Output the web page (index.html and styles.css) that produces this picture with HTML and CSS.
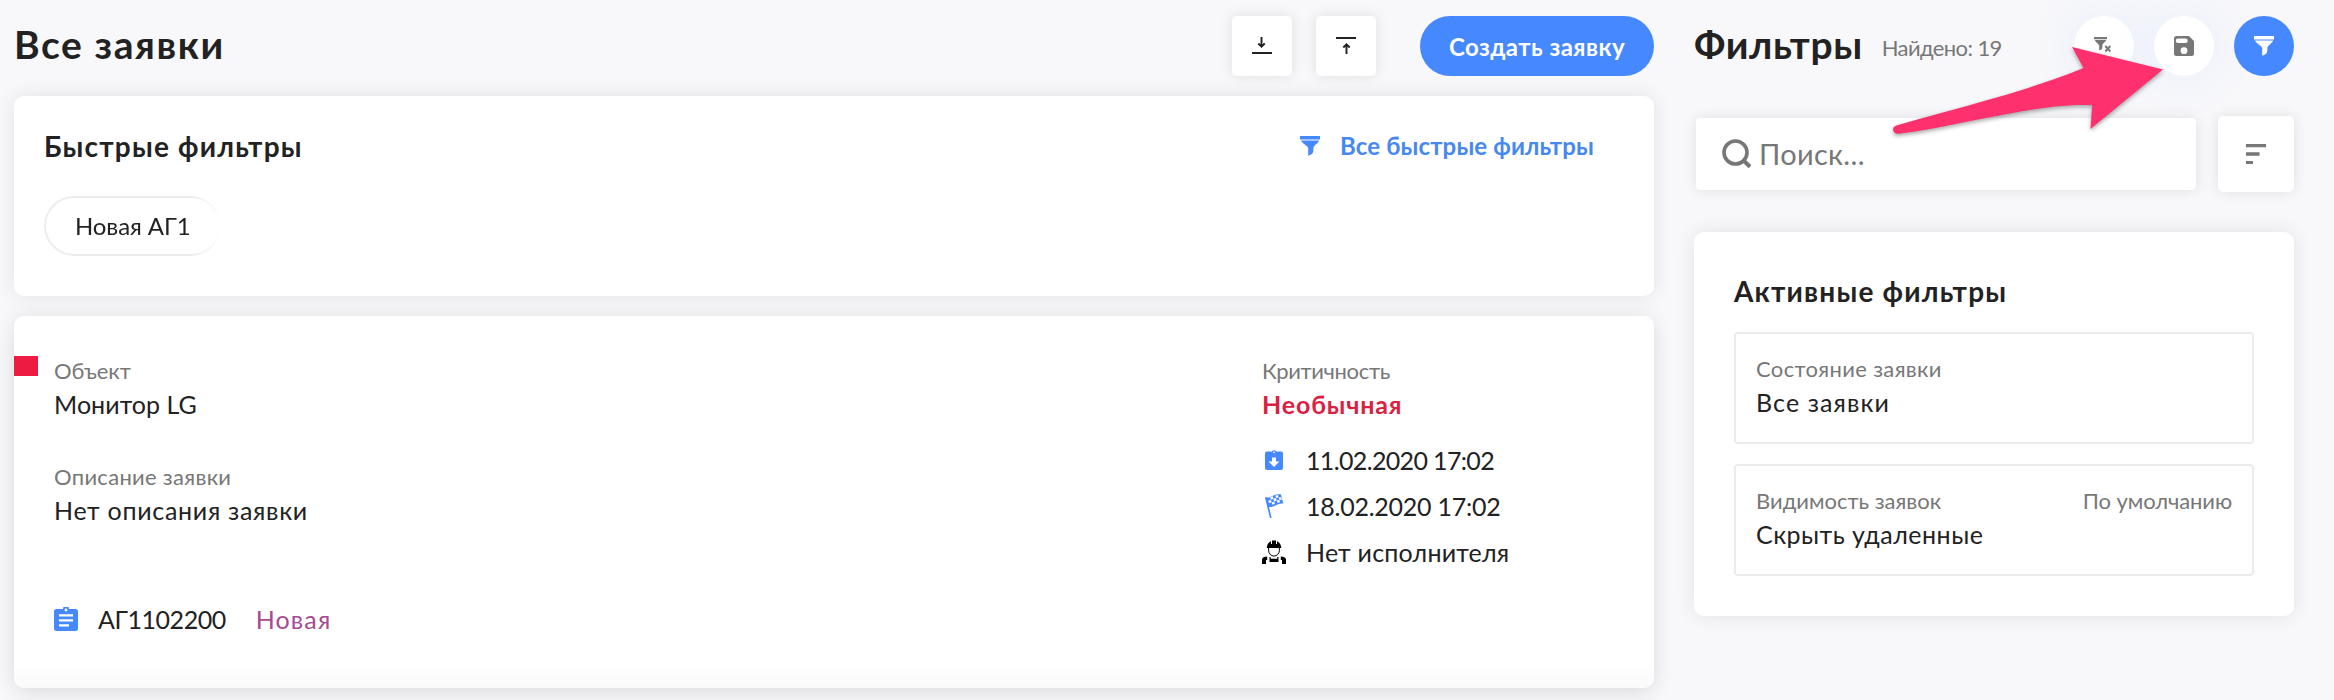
FILE: index.html
```html
<!DOCTYPE html>
<html lang="ru">
<head>
<meta charset="utf-8">
<title>Все заявки</title>
<link rel="stylesheet" href="styles.css">
</head>
<body>
<div class="page">
  <main class="main">
    <header class="topbar">
      <h1 class="title">Все заявки</h1>
      <button class="square-btn" aria-label="Скачать">
        <svg width="20" height="20" viewBox="0 0 20 20"><path d="M0 17h20" stroke="#222" stroke-width="2"/><path d="M9.500 1v9.500M6.300 7.500l3.200 3.200 3.200-3.200" fill="none" stroke="#222" stroke-width="1.900"/></svg>
      </button>
      <button class="square-btn" aria-label="Загрузить">
        <svg width="20" height="20" viewBox="0 0 20 20"><path d="M0 2h20" stroke="#222" stroke-width="2"/><path d="M10.500 18V8.500M7.300 11.500l3.200-3.200 3.200 3.200" fill="none" stroke="#222" stroke-width="1.900"/></svg>
      </button>
      <button class="create-btn">Создать заявку</button>
    </header>

    <section class="card quick">
      <div class="quick-head">
        <h2 class="subtitle quick-title">Быстрые фильтры</h2>
        <a class="quick-link">
          <svg width="20" height="20" viewBox="0 0 20 20" fill="#4688ff"><path d="M0 0h20v3.400H0zM1 4.600h18.200c-.6 2-3.600 3.800-5.600 6.400-.6 2 .2 4.500-1 6.200-1.200 1.300-2.600 1.700-4.400 2.500V12C6.400 9 1.800 7.200 1 4.600z"/></svg>
          <span>Все быстрые фильтры</span>
        </a>
      </div>
      <div class="chip"><span>Новая АГ1</span></div>
    </section>

    <section class="card ticket">
      <div class="flag"></div>
      <div class="ticket-info">
        <div class="label">Объект</div>
        <div class="value v-object">Монитор LG</div>
        <div class="label gap l-desc">Описание заявки</div>
        <div class="value v-desc">Нет описания заявки</div>
        <div class="ticket-foot">
          <svg width="24" height="24" viewBox="0 0 24 24"><path fill="#4688ff" d="M2.500 2H9a3 3 0 0 1 6 0h6.500A2.500 2.500 0 0 1 24 4.500v17a2.500 2.500 0 0 1-2.500 2.500h-19A2.500 2.500 0 0 1 0 21.500v-17A2.500 2.500 0 0 1 2.500 2z"/><circle cx="12" cy="3" r="1.400" fill="#fff"/><path d="M5 8.300h14M5 13.300h14M5 18.300h10" stroke="#fff" stroke-width="2.200"/></svg>
          <span class="number">АГ1102200</span>
          <span class="status">Новая</span>
        </div>
      </div>
      <div class="ticket-meta">
        <div class="label l-crit">Критичность</div>
        <div class="value critical">Необычная</div>
        <div class="meta-list">
          <div class="meta-row">
            <svg width="24" height="24" viewBox="0 0 24 24"><path fill="#4688ff" d="M5 3.500h5a2.200 2.200 0 0 1 4 0h5a2 2 0 0 1 2 2V20a2 2 0 0 1-2 2H5a2 2 0 0 1-2-2V5.500a2 2 0 0 1 2-2z"/><circle cx="12" cy="4.300" r=".9" fill="#fff"/><path fill="#fff" d="M10 9.500h4v4h3.400L12 19l-5.400-5.500H10z"/></svg>
            <span class="date-a">11.02.2020 17:02</span>
          </div>
          <div class="meta-row">
            <svg width="24" height="24" viewBox="0 0 24 24"><path d="M3.800 3.200l5 20.800" stroke="#4688ff" stroke-width="1.700"/><path fill="#4688ff" d="M4 3.500C9 4.500 12-1 19 .500l2.300 9C15 8.500 12 14 6.300 13z"/><path fill="#fff" d="M8.200 3.300l2.600-1 .7 2.500-2.600 1zM13.400 1.500l2.600-.6.6 2.500-2.600.6zM6.300 6.700l2.600-.8.7 2.500-2.600.7zM11.500 4.800l2.500-.9.7 2.500-2.600 1zM16.700 3.400l2.500-.1.6 2.400-2.500.2zM9.700 8.400l2.500-1 .6 2.400-2.500 1zM14.800 6.400l2.500-.6.7 2.500-2.600.5z"/></svg>
            <span class="date-b">18.02.2020 17:02</span>
          </div>
          <div class="meta-row">
            <svg width="24" height="24" viewBox="0 0 24 24"><path d="M5 6.600C5.200 3.800 7 2 9 1.200V4l1-.1V.5h4v3.400l1 .1V1.200c2 .8 3.800 2.600 4 5.400zM4.800 6.500h14.400v1.400H4.800z"/><path d="M6.600 8v2.500c0 3 2.500 5.600 5.400 5.600s5.400-2.600 5.400-5.600V8" fill="none" stroke="#000" stroke-width="1"/><path d="M7.500 17h1.200v1.800h6.600V17h1.200v5h-9zM5.200 16.500V20H4v4H0v-4.500c0-2 2.500-3 5.200-3zM18.800 16.500V20H20v4h4v-4.500c0-2-2.500-3-5.200-3z"/></svg>
            <span class="assignee">Нет исполнителя</span>
          </div>
        </div>
      </div>
    </section>
  </main>

  <aside class="side">
    <header class="topbar side-top">
      <h1 class="title title-side">Фильтры</h1>
      <span class="found">Найдено: 19</span>
      <div class="rounds">
        <button class="round-btn" aria-label="Сбросить фильтры">
          <svg width="20" height="20" viewBox="0 0 20 20"><path fill="#777" d="M0 1h13v2.200H0zM.8 4h11.400c-.5 1.500-2.600 2.900-3.700 4.600-.4 1.500.2 3.300-.8 4.600L5.200 14.500V9.500C3.900 7.200 1.500 6 .8 4z"/><path d="M11.300 10l5 5.500M16.300 10l-5 5.500" stroke="#777" stroke-width="1.900"/></svg>
        </button>
        <button class="round-btn" aria-label="Сохранить фильтр">
          <svg width="20" height="20" viewBox="0 0 20 20"><path fill="#777" fill-rule="evenodd" d="M2.500 0H15l5 5v12.500a2.500 2.500 0 0 1-2.500 2.500h-15A2.500 2.500 0 0 1 0 17.500v-15A2.500 2.500 0 0 1 2.500 0zM4 2.500a2 2 0 0 0 0 4.500h7.500a2 2 0 0 0 0-4.500zM10 11.300a3.400 3.400 0 1 0 0 6.800 3.400 3.400 0 0 0 0-6.800z"/></svg>
        </button>
        <button class="round-btn primary" aria-label="Фильтры">
          <svg width="20" height="20" viewBox="0 0 20 20" fill="#fff"><path d="M0 0h20v3.400H0zM1 4.600h18.200c-.6 2-3.600 3.800-5.600 6.400-.6 2 .2 4.500-1 6.200-1.200 1.300-2.600 1.700-4.400 2.500V12C6.400 9 1.800 7.200 1 4.600z"/></svg>
        </button>
      </div>
    </header>

    <div class="search-row">
      <div class="search">
        <svg width="30" height="30" viewBox="0 0 30 30" fill="none" stroke="#777"><circle cx="13.500" cy="13.500" r="11.500" stroke-width="3.600"/><path d="M20.500 20.500l7.500 7.300" stroke-width="4"/></svg>
        <span>Поиск...</span>
      </div>
      <button class="sort-btn" aria-label="Сортировка">
        <svg width="20" height="20" viewBox="0 0 20 20" fill="#777"><path d="M0 0h20v3.200H0zM0 8.300h13.500v3.400H0zM0 17h7v3H0z"/></svg>
      </button>
    </div>

    <section class="card panel">
      <h2 class="subtitle panel-title">Активные фильтры</h2>
      <div class="filter">
        <div class="label l-state"><span>Состояние заявки</span></div>
        <div class="value v-all">Все заявки</div>
      </div>
      <div class="filter">
        <div class="label l-vis"><span>Видимость заявок</span><span class="default">По умолчанию</span></div>
        <div class="value v-hide">Скрыть удаленные</div>
      </div>
    </section>
  </aside>
</div>

<svg class="pointer" width="290" height="104" viewBox="1884 38 290 104"><path fill="#ff306e" d="M2163 69.500L2090.500 129l1.700-23.800C2040 102 1960 126 1898.500 133.800c-6 .6-7.500-6.800-2-8.300C1960 107 2025 92 2083.500 68L2072 47z"/></svg>
</body>
</html>
```
FILE: styles.css
```css
* { box-sizing: border-box; }

body {
  margin: 0;
  height: 700px;
  overflow: hidden;
  background: #f8f8fb;
  color: #222;
  font-family: Lato, "Open Sans", sans-serif;
  font-size: 25px;
}

button {
  padding: 0;
  border: 0;
  background: #fff;
  color: #222;
  font: inherit;
}

svg { display: block; flex: none; }
h1, h2 { margin: 0; font-weight: 700; }

.page {
  display: grid;
  grid-template-columns: 1640px 600px;
  column-gap: 40px;
  padding: 16px 0 0 14px;
}

.topbar {
  display: flex;
  align-items: center;
  height: 60px;
}

.title {
  padding-bottom: 5px;
  margin-right: auto;
  font-size: 39px;
  line-height: 46px;
  letter-spacing: 1.6px;
}
.title-side { margin-right: 0; letter-spacing: .6px; }

.subtitle { font-size: 28px; line-height: 34px; letter-spacing: 1.2px; }
.quick-title { padding-top: 1px; }

.card {
  background: #fff;
  border-radius: 10px;
  box-shadow: 0 0 20px rgba(0, 0, 0, .09);
}

.square-btn {
  display: grid;
  place-items: center;
  width: 60px;
  height: 60px;
  margin-right: 24px;
  border-radius: 5px;
  box-shadow: 0 0 14px rgba(0, 0, 0, .1);
}

.create-btn {
  width: 234px;
  height: 60px;
  margin-left: 20px;
  border-radius: 30px;
  background: #4688ff;
  color: #fff;
  font-size: 24px;
  font-weight: 700;
  letter-spacing: .45px;
}

.quick { height: 200px; margin-top: 20px; padding: 32px 30px; }

.quick-head {
  display: flex;
  justify-content: space-between;
  align-items: center;
  height: 34px;
  padding-right: 30px;
}

.quick-link {
  display: flex;
  align-items: center;
  gap: 20px;
  padding-top: 2px;
  color: #4688ef;
  font-size: 24px;
  font-weight: 700;
  line-height: 34px;
  letter-spacing: .15px;
}

.chip {
  display: flex;
  align-items: center;
  width: 177px;
  height: 60px;
  margin-top: 34px;
  padding: 0 0 2px 29px;
  border: 2px solid #ececec;
  border-radius: 30px;
  font-size: 24px;
  letter-spacing: -.1px;
  mask-image: linear-gradient(90deg, #000 148px, transparent 177px);
}

.ticket {
  display: grid;
  grid-template-columns: 40px 1208px 1fr;
  height: 372px;
  margin-top: 20px;
  padding-top: 36px;
  background: linear-gradient(#fff 345px, #fafafa 372px);
  box-shadow: 0 0 20px rgba(0, 0, 0, .09), 0 14px 24px rgba(0, 0, 0, .04);
}

.flag { width: 24px; height: 20px; margin-top: 4px; background: #ed1b41; }

.label { height: 34px; padding-top: 1px; color: #777; font-size: 22px; line-height: 35px; }
.value { font-size: 25px; line-height: 37px; height: 36px; }
.gap { margin-top: 36px; }

.v-object { letter-spacing: .05px; }
.l-desc { letter-spacing: .3px; }
.v-desc { letter-spacing: .7px; }
.l-crit { letter-spacing: -.35px; }
.critical { color: #db2143; font-weight: 700; letter-spacing: .85px; }

.ticket-foot {
  display: flex;
  align-items: center;
  height: 38px;
  margin-top: 72px;
}
.number { margin-left: 20px; letter-spacing: -.45px; }
.status { margin-left: 30px; color: #a64a93; letter-spacing: 1.1px; }

.meta-list { margin-top: 15px; }
.meta-row { display: flex; align-items: center; gap: 20px; height: 46px; }
.date-a { letter-spacing: -.65px; }
.date-b { letter-spacing: -.25px; }
.assignee { letter-spacing: .2px; }

.found {
  margin-left: 19px;
  padding-top: 3px;
  color: #777;
  font-size: 22px;
  letter-spacing: -.6px;
}

.rounds { display: flex; gap: 20px; margin-left: auto; }
.round-btn {
  display: grid;
  place-items: center;
  width: 60px;
  height: 60px;
  border-radius: 50%;
  box-shadow: 0 0 50px rgba(70, 136, 255, .1);
}
.round-btn.primary { background: #4688ff; box-shadow: none; }

.search-row {
  display: flex;
  justify-content: space-between;
  align-items: center;
  margin-top: 40px;
  padding-left: 2px;
}
.search {
  display: flex;
  align-items: center;
  gap: 7px;
  width: 500px;
  height: 72px;
  padding: 0 26px 1px;
  border-radius: 4px;
  background: #fff;
  box-shadow: 0 0 14px rgba(0, 0, 0, .1);
  color: #777;
  font-size: 29px;
  letter-spacing: .3px;
}
.sort-btn {
  display: grid;
  place-items: center;
  width: 76px;
  height: 76px;
  border-radius: 5px;
  box-shadow: 0 0 14px rgba(0, 0, 0, .1);
}

.panel { height: 384px; margin-top: 40px; padding: 40px; }
.panel-title { line-height: 38px; margin-bottom: 22px; }

.filter {
  height: 112px;
  margin-bottom: 20px;
  padding: 16px 20px;
  border: 2px solid #ececec;
  border-radius: 4px;
}
.filter .label { display: flex; justify-content: space-between; }
.l-state { letter-spacing: .35px; }
.l-vis { letter-spacing: 0; }
.default { letter-spacing: -.1px; }
.v-all { letter-spacing: 1.1px; }
.v-hide { letter-spacing: .5px; }

/* Arrow annotation drawn over the filter header and search field */
.pointer {
  position: absolute;
  left: 1884px;
  top: 38px;
  filter: drop-shadow(0 2px 2px rgba(0, 0, 0, .35));
}
```
